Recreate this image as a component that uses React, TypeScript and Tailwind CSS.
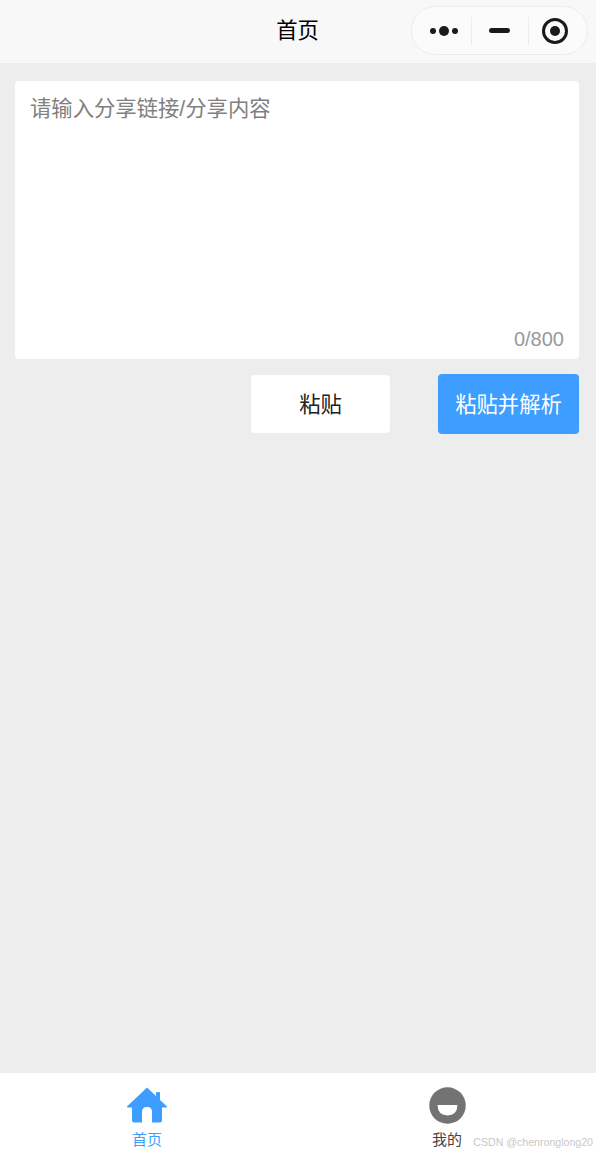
/**
 * App - mini program home page with share link input and bottom tabs
 */
const fontStack = 'font-["Liberation_Sans","Noto_Sans_CJK_SC",sans-serif]';

function HomeIcon() {
  return (
    <svg width="42" height="37" viewBox="0 0 42 37" fill="#3d9eff">
      <path d="M21 0.5 L30 9 V6 Q30 5 31 5 H33 Q34 5 34 6 V13 L41 19.5 Q41.5 20.5 40 20.5 H36 V33.5 Q36 35.5 34 35.5 H26 V25 Q26 20 21 20 Q16 20 16 25 V35.5 H8 Q6 35.5 6 33.5 V20.5 H2 Q0.5 20.5 1 19.5 Z" />
    </svg>
  );
}

function MineIcon() {
  return (
    <svg width="37" height="37" viewBox="0 0 37 37">
      <circle cx="18.5" cy="18.5" r="18.25" fill="#737373" />
      <path d="M8.5 18 H28.5 Q28 28.5 18.5 28.5 Q9 28.5 8.5 18 Z" fill="#fff" />
    </svg>
  );
}

function Capsule() {
  return (
    <div className="flex items-center w-[177px] h-[49px] rounded-full border border-[#ececec] bg-[#fbfbfb]">
      <div className="w-[59px] flex items-center justify-center gap-[3px] pl-[4px]">
        <span className="w-[6px] h-[6px] rounded-full bg-[#1a1a1a]" />
        <span className="w-[10px] h-[10px] rounded-full bg-[#1a1a1a]" />
        <span className="w-[6px] h-[6px] rounded-full bg-[#1a1a1a]" />
      </div>
      <div className="w-px h-[28px] bg-[#ececec]" />
      <div className="w-[56px] flex items-center justify-center pr-[1px]">
        <span className="w-[21px] h-[5px] rounded-full bg-[#1a1a1a]" />
      </div>
      <div className="w-px h-[28px] bg-[#ececec]" />
      <div className="flex-1 flex items-center justify-center pr-[6px]">
        <span className="w-[26px] h-[26px] rounded-full border-[3px] border-[#1a1a1a] flex items-center justify-center">
          <span className="w-[10px] h-[10px] rounded-full bg-[#1a1a1a]" />
        </span>
      </div>
    </div>
  );
}

export default function App() {
  return (
    <div className={`w-[596px] h-[1152px] flex flex-col bg-[#ededed] overflow-hidden ${fontStack}`}>
      {/* Nav bar */}
      <div className="relative h-[63px] shrink-0 bg-[#f8f8f8] flex items-center justify-center">
        <span className="text-[21.33px] leading-[30px] -mt-[2px] -ml-[1px] text-black">首页</span>
        <div className="absolute right-[8px] top-[6px]">
          <Capsule />
        </div>
      </div>

      {/* Content */}
      <div className="flex-1 pl-[15px] pt-[18px] pr-[17px]">
        <div className="h-[278px] bg-white rounded-[4px] px-[15px] pt-[12px] pb-[6px] flex flex-col justify-between">
          <div className="text-[21.33px] leading-[32px] text-[#808080]">请输入分享链接/分享内容</div>
          <div className="text-right text-[20px] leading-[28px] text-[#999999]">0/800</div>
        </div>
        <div className="flex justify-end items-center gap-[48px] mt-[15px]">
          <button className="w-[139px] h-[58px] pt-[3px] bg-white rounded-[4px] text-[21.33px] text-[#222222]">粘贴</button>
          <button className="w-[141px] h-[60px] pt-[3px] bg-[#3d9eff] rounded-[4px] text-[21.33px] text-white">粘贴并解析</button>
        </div>
      </div>

      {/* Tab bar */}
      <div className="relative h-[79px] shrink-0 bg-white flex">
        <div className="w-[294px] flex flex-col items-center pt-[14px]">
          <HomeIcon />
          <span className="text-[15px] leading-[18px] mt-[7px] text-[#3d9eff]">首页</span>
        </div>
        <div className="w-[302px] pl-[4px] flex flex-col items-center pt-[14px]">
          <MineIcon />
          <span className="text-[15px] leading-[18px] mt-[7px] text-[#444444]">我的</span>
        </div>
        <span className="absolute right-[3px] bottom-[3px] text-[10.6px] leading-[14px] text-[#c8c8c8]">CSDN @chenronglong20</span>
      </div>
    </div>
  );
}
